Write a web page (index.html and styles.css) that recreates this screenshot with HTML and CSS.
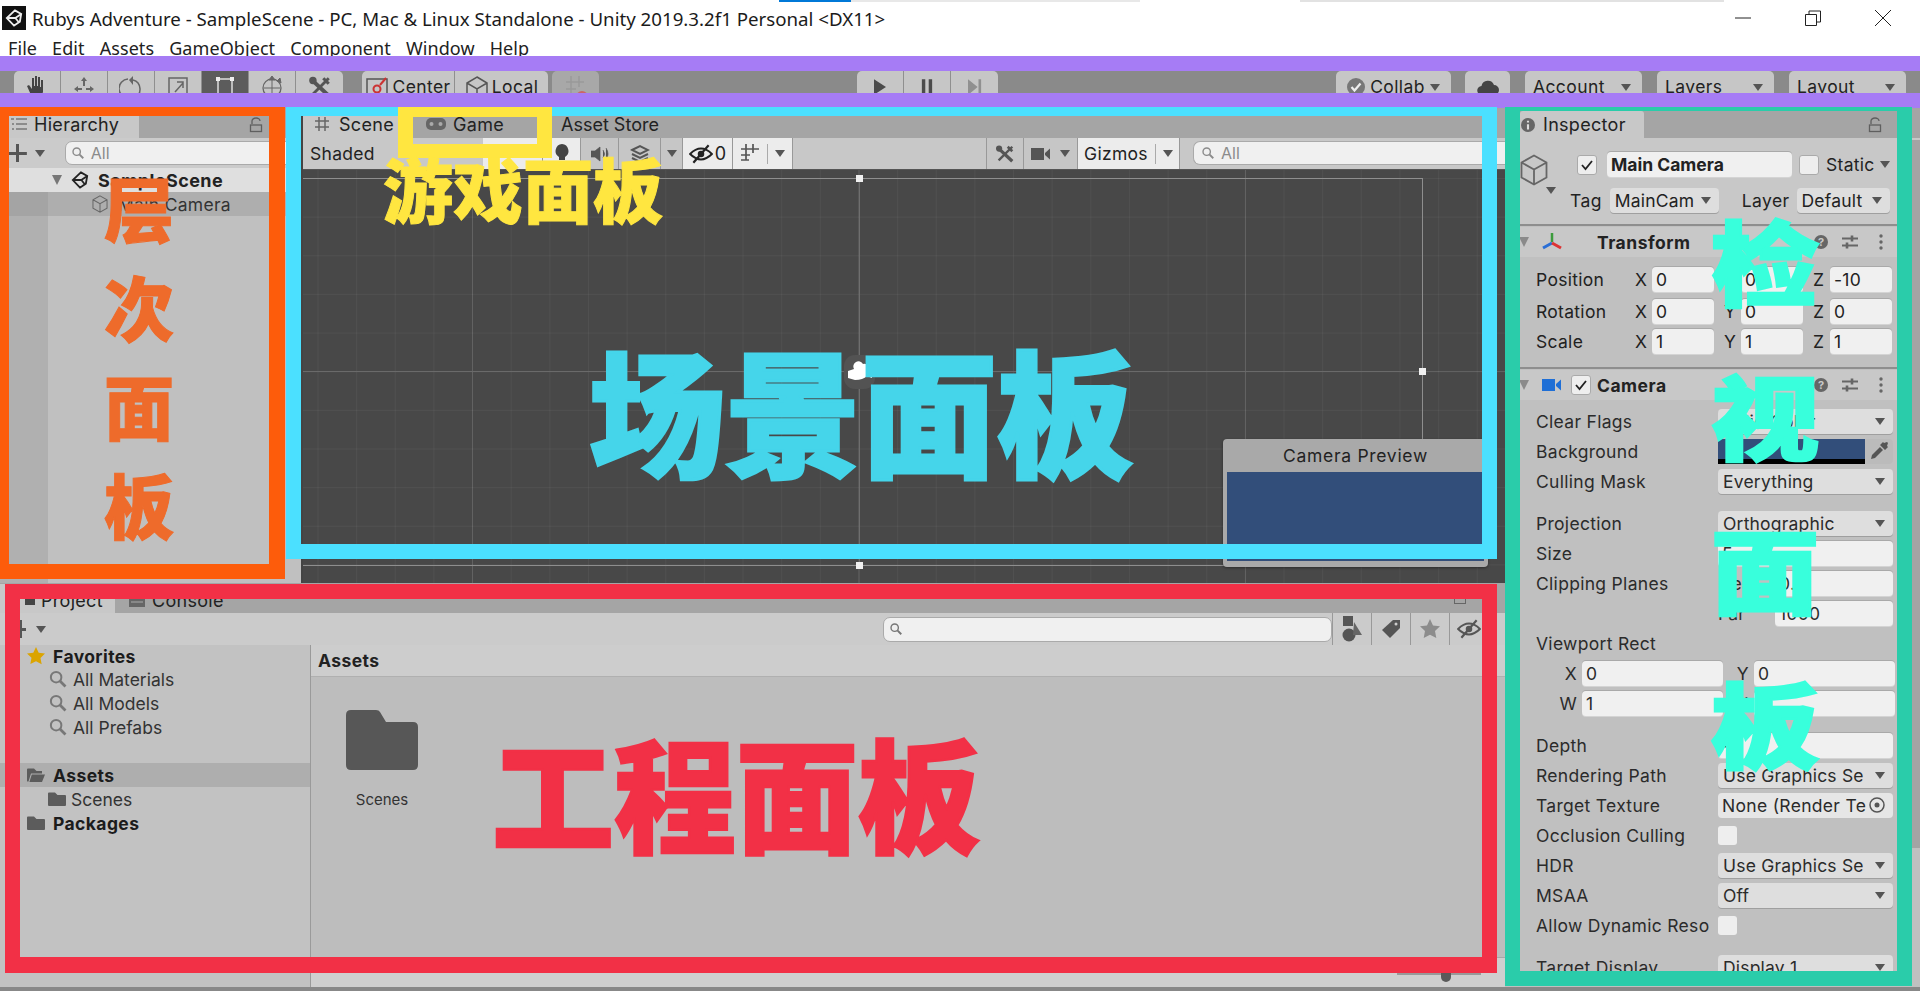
FILE: index.html
```html
<!DOCTYPE html>
<html lang="zh-CN">
<head>
  <meta charset="UTF-8">
  <title>Rubys Adventure - Unity</title>
  <link rel="stylesheet" href="styles.css">
</head>
<body>
  <svg class="defs" width="0" height="0">
    <defs>
      <symbol id="i-search" viewBox="0 0 16 16"><circle cx="6.5" cy="6.5" r="4.2" fill="none" stroke="currentColor" stroke-width="1.6"/><path d="M9.6 9.6l4.4 4.4" stroke="currentColor" stroke-width="2.2"/></symbol>
      <symbol id="i-lock" viewBox="0 0 14 16"><path d="M3 7V4a4 3 0 0 1 8 0" fill="none" stroke="currentColor" stroke-width="1.3"/><rect x="1.5" y="8" width="11" height="6.5" fill="none" stroke="currentColor" stroke-width="1.3"/></symbol>
      <symbol id="i-cube" viewBox="0 0 28 32"><path d="M14 1.5L26.5 8.500V23.500L14 30.500L1.500 23.500V8.500ZM1.500 8.500L14 15.500L26.500 8.500M14 15.500V30.500" fill="none" stroke="currentColor" stroke-width="1.8"/></symbol>
      <symbol id="i-unity" viewBox="0 0 20 20"><path d="M11 1.500L18 5.500L16.500 14L10 18.500L2 10L11 1.500ZM2 10H11.500M11.500 10L18 5.500M11.500 10L16 15.500" fill="none" stroke="currentColor" stroke-width="2"/></symbol>
      <symbol id="i-help" viewBox="0 0 16 16"><circle cx="8" cy="8" r="7" fill="currentColor"/><text x="8" y="12" text-anchor="middle" font-size="11" font-weight="700" font-family="Inter" fill="#c8c8c8">?</text></symbol>
      <symbol id="i-sliders" viewBox="0 0 18 16"><path d="M1 4.500H17M1 11.500H17" stroke="currentColor" stroke-width="1.800"/><path d="M11 1.500V7.500M6 8.500V14.500" stroke="currentColor" stroke-width="2.600"/></symbol>
      <symbol id="i-dots" viewBox="0 0 4 16"><circle cx="2" cy="2" r="1.700" fill="currentColor"/><circle cx="2" cy="8" r="1.700" fill="currentColor"/><circle cx="2" cy="14" r="1.700" fill="currentColor"/></symbol>
      <symbol id="i-folder" viewBox="0 0 18 16"><path d="M0 2.500Q0 1.500 1 1.500H7L9.500 4H17Q18 4 18 5V14Q18 15 17 15H1Q0 15 0 14Z" fill="currentColor"/></symbol>
      <symbol id="i-tools" viewBox="0 0 22 22"><path d="M3 4L19 19" stroke="currentColor" stroke-width="3.600"/><path d="M19 3L4 18" stroke="currentColor" stroke-width="2.600"/><circle cx="4.500" cy="5" r="3.400" fill="currentColor"/><path d="M15 2l5 5-2 2-5-5z" fill="currentColor"/></symbol>
      <symbol id="i-camera" viewBox="0 0 20 14"><rect x="0" y="1" width="13" height="12" fill="currentColor"/><path d="M14 6L19 1.500V12.500L14 8Z" fill="currentColor"/></symbol>
      <symbol id="i-eye" viewBox="0 0 22 18"><path d="M1 9Q11 -1 21 9Q11 19 1 9Z" fill="none" stroke="currentColor" stroke-width="1.800"/><circle cx="11" cy="9" r="3" fill="currentColor"/><path d="M4 17L18 1" stroke="currentColor" stroke-width="2"/></symbol>
      <symbol id="i-grid" viewBox="0 0 20 22"><path d="M6 1V17M13 1V10M1 6H19M1 12H10M1 17H9" fill="none" stroke="currentColor" stroke-width="1.700"/></symbol>
    </defs>
  </svg>

  <div class="window">
    <header class="titlebar">
      <span class="app-icon"><svg width="18" height="18"><use href="#i-unity"/></svg></span>
      <span class="title-text">Rubys Adventure - SampleScene - PC, Mac &amp; Linux Standalone - Unity 2019.3.2f1 Personal &lt;DX11&gt;</span>
      <div class="win-controls">
        <svg width="16" height="16" viewBox="0 0 16 16"><path d="M0 8H16" stroke="#222" stroke-width="1"/></svg>
        <svg width="16" height="16" viewBox="0 0 16 16"><path d="M.5 4.500H11.500V15.500H.5ZM4 4.500V1H15.500V12H11.500" fill="none" stroke="#222" stroke-width="1"/></svg>
        <svg width="16" height="16" viewBox="0 0 16 16"><path d="M0 0L16 16M16 0L0 16" stroke="#222" stroke-width="1"/></svg>
      </div>
    </header>

    <nav class="menubar">
      <span>File</span><span>Edit</span><span>Assets</span><span>GameObject</span><span>Component</span><span>Window</span><span>Help</span>
    </nav>

    <div class="toolbar">
      <div class="tb-group tools">
        <button class="tb-btn"><svg width="22" height="24" viewBox="0 0 22 24"><path d="M5 20L1 11l2-1 3 4V3h2v8h1V1h2v10h1V2h2v10h1V5h2v12l-2 5H7z" fill="#444"/></svg></button>
        <button class="tb-btn"><svg width="24" height="24" viewBox="0 0 24 24"><path d="M12 2l3 4h-2v5h-2V6H9zM2 14l4-3v2h4v2H6v2zM22 14l-4-3v2h-4v2h4v2zM12 24l3-4H9z" fill="#666"/></svg></button>
        <button class="tb-btn"><svg width="24" height="24" viewBox="0 0 24 24"><path d="M9 4A9.500 9.500 0 0 0 10 23M15 23A9.500 9.500 0 0 0 14 5" fill="none" stroke="#666" stroke-width="1.500"/><path d="M14 1v9l-4-5z" fill="#666"/></svg></button>
        <button class="tb-btn"><svg width="24" height="24" viewBox="0 0 24 24"><path d="M3 3H21V21H3Z" fill="none" stroke="#666" stroke-width="1.500"/><path d="M9 17L17 8M11 7H17V13" fill="none" stroke="#666" stroke-width="1.500"/></svg></button>
        <button class="tb-btn dark"><svg width="24" height="24" viewBox="0 0 24 24"><path d="M5 6V23M19 6V23M6 4H18" stroke="#ddd" stroke-width="1.500"/><path d="M3 2h4v4H3zM17 2h4v4h-4z" fill="#eee"/></svg></button>
        <button class="tb-btn"><svg width="24" height="24" viewBox="0 0 24 24"><circle cx="12" cy="13" r="9" fill="none" stroke="#666" stroke-width="1.300"/><path d="M12 5V21M4 13H20M12 1l3 4H9zM20 3l1 5-4-2z" fill="#666" stroke="#666" stroke-width="1"/></svg></button>
        <button class="tb-btn"><svg width="24" height="24" color="#555"><use href="#i-tools"/></svg></button>
      </div>
      <div class="tb-group pivots">
        <button class="tb-btn wide"><svg width="24" height="24" viewBox="0 0 24 24"><path d="M2 4H22V24H2Z" fill="none" stroke="#555" stroke-width="1.500"/><circle cx="12" cy="14" r="3.500" fill="none" stroke="#c33" stroke-width="2"/><path d="M15 10L21 3" stroke="#c33" stroke-width="2"/></svg>Center</button>
        <button class="tb-btn wide"><svg width="24" height="24" viewBox="0 0 24 24"><path d="M12 2L22 8V19L12 24L2 19V8ZM2 8L12 14L22 8M12 14V24" fill="none" stroke="#555" stroke-width="1.500"/><path d="M12 24a6 5 0 0 1 10 0" fill="none" stroke="#c33" stroke-width="2"/></svg>Local</button>
      </div>
      <div class="tb-group snap">
        <button class="tb-btn"><svg width="24" height="24" viewBox="0 0 24 24"><path d="M7 1V19M15 1V12M2 7H20M2 14H12" fill="none" stroke="#999" stroke-width="1.500"/><path d="M13 22a5 5 0 0 1 10 0" fill="none" stroke="#c66" stroke-width="2"/></svg></button>
      </div>
      <div class="tb-group play">
        <button class="tb-btn"><svg width="12" height="16" viewBox="0 0 14 18"><path d="M0 0L14 9L0 18Z" fill="#4b4b4b"/></svg></button>
        <button class="tb-btn"><svg width="12" height="16" viewBox="0 0 14 18"><path d="M1 0h4v18H1zM9 0h4v18H9z" fill="#4b4b4b"/></svg></button>
        <button class="tb-btn"><svg width="14" height="16" viewBox="0 0 16 18"><path d="M0 0L11 9L0 18ZM12 0h3v18h-3z" fill="#909090"/></svg></button>
      </div>
      <div class="tb-group collab">
        <button class="tb-btn pill collab-btn"><svg width="18" height="18" viewBox="0 0 18 18"><circle cx="9" cy="9" r="9" fill="#777"/><path d="M4.500 9l3 3.500 6-7" fill="none" stroke="#eee" stroke-width="2.200"/></svg>Collab<i class="caret"></i></button>
        <button class="tb-btn pill cloud-btn"><svg width="22" height="20" viewBox="0 0 22 20"><path d="M5 18a4.500 4.500 0 0 1-.5-9A6.500 6.500 0 0 1 17 8a5 5 0 0 1 0 10Z" fill="#444"/></svg></button>
        <button class="tb-btn pill menu-btn">Account<i class="caret"></i></button>
        <button class="tb-btn pill menu-btn">Layers<i class="caret"></i></button>
        <button class="tb-btn pill menu-btn">Layout<i class="caret"></i></button>
      </div>
    </div>

    <div class="workspace">
      <div class="left-col">
        <div class="top-row">
          <section class="hierarchy">
            <div class="tabstrip">
              <div class="tab active hier-tab">
                <svg width="16" height="14" viewBox="0 0 16 14"><path d="M5 2H16M5 7H16M5 12H16M0 2H3M1 7H3M1 12H3" stroke="#777" stroke-width="1.500"/></svg>
                Hierarchy
              </div>
              <svg class="lock" width="14" height="16"><use href="#i-lock"/></svg>
            </div>
            <div class="hier-tools">
              <span class="plus"></span><i class="caret"></i>
              <div class="search hier-search"><svg width="14" height="14"><use href="#i-search"/></svg>All</div>
            </div>
            <div class="hier-row scene-row">
              <i class="tri"></i>
              <svg width="18" height="18"><use href="#i-unity"/></svg>
              <b>SampleScene</b>
            </div>
            <div class="hier-row cam-row">
              <svg width="16" height="18"><use href="#i-cube"/></svg>
              <span>Main Camera</span>
            </div>
            <div class="hier-rest"></div>
          </section>

          <section class="scene">
            <div class="tabstrip scene-tabs">
              <div class="tab active scene-tab">
                <svg width="14" height="14" viewBox="0 0 14 14"><path d="M4 0V14M10 0V14M0 4H14M0 10H14" stroke="#666" stroke-width="1.500"/></svg>
                Scene
              </div>
              <div class="tab game-tab">
                <svg width="20" height="12" viewBox="0 0 20 12"><rect width="20" height="12" rx="5" fill="#666"/><circle cx="5.500" cy="6" r="2" fill="#aaa"/><circle cx="14.500" cy="6" r="2" fill="#aaa"/></svg>
                Game
              </div>
              <div class="tab store-tab">Asset Store</div>
            </div>
            <div class="scene-tools">
              <span class="shaded">Shaded</span>
              <div class="st-btn lit w2d"></div>
              <div class="st-btn lit w37"><svg width="14" height="20" viewBox="0 0 14 20"><path d="M7 0a7 7 0 0 1 3 13v3H4v-3A7 7 0 0 1 7 0ZM4 17h6v3H4z" fill="#444"/></svg></div>
              <div class="st-btn w37"><svg width="18" height="16" viewBox="0 0 18 16"><path d="M0 5h4l5-4v14l-5-4H0zM12 4q3 4 0 8M15 2q4 6 0 12" fill="#555" stroke="#555" stroke-width=".7"/></svg></div>
              <div class="st-btn w42"><svg width="20" height="20" viewBox="0 0 20 20"><path d="M2 6l8-4 8 4-8 4zM2 10l8 4 8-4M2 14l8 4 8-4" fill="none" stroke="#555" stroke-width="2"/></svg></div>
              <div class="st-btn w20"><i class="caret"></i></div>
              <div class="st-btn lit hidden-btn"><svg width="24" height="20"><use href="#i-eye"/></svg>0</div>
              <div class="st-btn lit grid-btn"><svg width="20" height="22"><use href="#i-grid"/></svg><span class="vsep"></span><i class="caret"></i></div>
              <div class="st-btn w37 tool-btn"><svg width="20" height="20"><use href="#i-tools"/></svg></div>
              <div class="st-btn cam-btn"><svg width="20" height="14"><use href="#i-camera"/></svg><i class="caret"></i></div>
              <div class="st-btn lit gizmos">Gizmos<span class="vsep"></span><i class="caret"></i></div>
              <div class="search scene-search"><svg width="14" height="14"><use href="#i-search"/></svg>All</div>
            </div>
            <div class="scene-view">
              <span class="gz gz-top"></span>
              <span class="gz gz-mid"></span>
              <span class="gz gz-bottom"></span>
              <span class="gz gz-right"></span>
              <span class="gz gz-center"></span>
              <span class="handle h-top"></span>
              <span class="handle h-right"></span>
              <span class="handle h-bottom"></span>
              <span class="cam-ring"></span>
              <svg class="cam-gizmo" width="26" height="22" viewBox="0 0 26 22"><path d="M1 18V11L7 9A5 5 0 0 1 16 4A5 5 0 0 1 21 12L25 10V18L20 16Q16 20 8 20Z" fill="#fff"/></svg>
              <div class="preview">
                <div class="preview-title">Camera Preview</div>
                <div class="preview-body"></div>
              </div>
            </div>
          </section>
        </div>

        <section class="project">
          <div class="tabstrip proj-tabs">
            <div class="tab active proj-tab"><span class="sq"></span>Project</div>
            <div class="tab console-tab"><svg width="16" height="14" viewBox="0 0 16 14"><rect width="16" height="14" fill="#666"/><path d="M2 5H14M2 9H14" stroke="#aaa"/></svg>Console</div>
            <span class="maxi"></span>
          </div>
          <div class="proj-tools">
            <span class="plus small"></span><i class="caret"></i>
            <div class="search proj-search"><svg width="14" height="14"><use href="#i-search"/></svg></div>
            <div class="pt-btn"><svg width="22" height="26" viewBox="0 0 22 26"><rect x="2" y="0" width="10" height="10" fill="#555"/><circle cx="8" cy="19" r="6.500" fill="#555"/><path d="M13 6L21 19H12Z" fill="#666"/></svg></div>
            <div class="pt-btn"><svg width="20" height="20" viewBox="0 0 20 20"><path d="M12 1H19V9L9 19L1 11Z" fill="#555"/><circle cx="15" cy="5" r="1.500" fill="#ccc"/></svg></div>
            <div class="pt-btn"><svg width="20" height="20" viewBox="0 0 20 20"><path d="M10 0l3 6.500 7 .8-5 4.800 1.300 7L10 15.700 3.700 19 5 12 0 7.300l7-.8z" fill="#8c8c8c"/></svg></div>
            <div class="pt-btn"><svg width="24" height="20"><use href="#i-eye"/></svg></div>
          </div>
          <div class="proj-body">
            <div class="tree">
              <div class="tree-row top"><svg width="18" height="18" viewBox="0 0 20 20"><path d="M10 0l3 6.500 7 .8-5 4.800 1.300 7L10 15.700 3.700 19 5 12 0 7.300l7-.8z" fill="#dba400"/></svg><b>Favorites</b></div>
              <div class="tree-row sub"><svg class="mag" width="20" height="20"><use href="#i-search"/></svg>All Materials</div>
              <div class="tree-row sub"><svg class="mag" width="20" height="20"><use href="#i-search"/></svg>All Models</div>
              <div class="tree-row sub"><svg class="mag" width="20" height="20"><use href="#i-search"/></svg>All Prefabs</div>
              <div class="tree-row blank"></div>
              <div class="tree-row selected"><svg class="fold" width="18" height="16" viewBox="0 0 18 16"><path d="M0 2.500Q0 1.500 1 1.500H7L9.500 4H15V6.500H4L1.500 14.500H1Q0 14.500 0 14ZM4.800 7.500H18L15 15H2.400Z" fill="#5c5c5c"/></svg><b>Assets</b></div>
              <div class="tree-row sub"><svg class="fold" width="18" height="16"><use href="#i-folder"/></svg>Scenes</div>
              <div class="tree-row"><svg class="fold" width="18" height="16"><use href="#i-folder"/></svg><b>Packages</b></div>
            </div>
            <div class="browser">
              <div class="crumb">Assets</div>
              <div class="grid-area">
                <div class="asset">
                  <svg width="72" height="60" viewBox="0 0 72 60"><path d="M0 5Q0 0 5 0H30Q33 0 34 2L40 12H67Q72 12 72 17V55Q72 60 67 60H5Q0 60 0 55Z" fill="#575757"/></svg>
                  <span>Scenes</span>
                </div>
              </div>
              <div class="browser-foot"><span class="zoom-track"></span><span class="zoom-knob"></span></div>
            </div>
          </div>
        </section>
      </div>

      <aside class="inspector">
        <div class="tabstrip insp-tabs">
          <div class="tab active insp-tab">
            <svg width="14" height="16" viewBox="0 0 16 16"><circle cx="8" cy="8" r="8" fill="#666"/><path d="M8 3v2M8 7v6" stroke="#ddd" stroke-width="2.400"/></svg>
            Inspector
          </div>
          <svg class="lock" width="14" height="16"><use href="#i-lock"/></svg>
        </div>

        <div class="go-head">
          <div class="go-icon">
            <svg width="28" height="32"><use href="#i-cube"/></svg>
            <i class="caret"></i>
          </div>
          <div class="go-lines">
            <div class="go-line">
              <span class="check on"><svg width="12" height="12" viewBox="0 0 12 12"><path d="M1 6l3.500 4L11 2" fill="none" stroke="#222" stroke-width="1.800"/></svg></span>
              <div class="field name-field">Main Camera</div>
              <span class="check"></span>
              <span class="static-label">Static<i class="caret"></i></span>
            </div>
            <div class="go-line second">
              <span>Tag</span>
              <div class="drop tag-drop">MainCam<i class="caret"></i></div>
              <span class="layer-label">Layer</span>
              <div class="drop layer-drop">Default<i class="caret"></i></div>
            </div>
          </div>
        </div>

        <div class="comp-head">
          <i class="tri"></i>
          <svg class="axis" width="20" height="18" viewBox="0 0 20 18"><path d="M10 0V9" stroke="#3c9b3c" stroke-width="2.500"/><path d="M10 10L1 15" stroke="#2b6fd6" stroke-width="3"/><path d="M10 10L19 15" stroke="#d33" stroke-width="3"/></svg>
          <b class="comp-name">Transform</b>
          <div class="comp-icons"><svg class="help" width="16" height="16"><use href="#i-help"/></svg><svg width="18" height="16"><use href="#i-sliders"/></svg><svg width="4" height="16"><use href="#i-dots"/></svg></div>
        </div>
        <div class="xform">
          <div class="xrow pos"><span class="lbl">Position</span><span class="ax">X</span><div class="field">0</div><span class="ax">Y</span><div class="field">0</div><span class="ax">Z</span><div class="field">-10</div></div>
          <div class="xrow"><span class="lbl">Rotation</span><span class="ax">X</span><div class="field">0</div><span class="ax">Y</span><div class="field">0</div><span class="ax">Z</span><div class="field">0</div></div>
          <div class="xrow"><span class="lbl">Scale</span><span class="ax">X</span><div class="field">1</div><span class="ax">Y</span><div class="field">1</div><span class="ax">Z</span><div class="field">1</div></div>
        </div>

        <div class="comp-head camera-head">
          <i class="tri"></i>
          <svg class="axis" width="20" height="14"><use href="#i-camera"/></svg>
          <span class="check on small"><svg width="12" height="12" viewBox="0 0 12 12"><path d="M1 6l3.500 4L11 2" fill="none" stroke="#222" stroke-width="1.800"/></svg></span>
          <b class="comp-name">Camera</b>
          <div class="comp-icons"><svg class="help" width="16" height="16"><use href="#i-help"/></svg><svg width="18" height="16"><use href="#i-sliders"/></svg><svg width="4" height="16"><use href="#i-dots"/></svg></div>
        </div>
        <div class="props">
          <div class="prop"><span class="lbl">Clear Flags</span><div class="drop">Solid Color<i class="caret"></i></div></div>
          <div class="prop"><span class="lbl">Background</span><div class="color-field"><span class="swatch"></span><svg width="20" height="20" viewBox="0 0 20 20"><path d="M2 18l1-4 8-8 3 3-8 8zM11 4l3-3 1 1 3-1 1 1-1 3 1 1-3 3z" fill="#555"/></svg></div></div>
          <div class="prop"><span class="lbl">Culling Mask</span><div class="drop">Everything<i class="caret"></i></div></div>
          <div class="prop gap"><span class="lbl">Projection</span><div class="drop">Orthographic<i class="caret"></i></div></div>
          <div class="prop"><span class="lbl">Size</span><div class="field">5</div></div>
          <div class="prop"><span class="lbl">Clipping Planes</span><div class="sub-field"><span>Near</span><div class="field">0.3</div></div></div>
          <div class="prop"><span class="lbl"></span><div class="sub-field"><span>Far</span><div class="field">1000</div></div></div>
          <div class="prop"><span class="lbl">Viewport Rect</span></div>
          <div class="prop rect-row"><span class="ax">X</span><div class="field">0</div><span class="ax">Y</span><div class="field">0</div></div>
          <div class="prop rect-row"><span class="ax">W</span><div class="field">1</div><span class="ax">H</span><div class="field">1</div></div>
          <div class="prop gap"><span class="lbl">Depth</span><div class="field">-1</div></div>
          <div class="prop"><span class="lbl">Rendering Path</span><div class="drop">Use Graphics Se<i class="caret"></i></div></div>
          <div class="prop"><span class="lbl">Target Texture</span><div class="obj-field"><span>None (Render Te</span><svg width="18" height="18" viewBox="0 0 18 18"><circle cx="9" cy="9" r="7" fill="none" stroke="#555" stroke-width="1.500"/><circle cx="9" cy="9" r="2.500" fill="#555"/></svg></div></div>
          <div class="prop"><span class="lbl">Occlusion Culling</span><span class="check flat"></span></div>
          <div class="prop"><span class="lbl">HDR</span><div class="drop">Use Graphics Se<i class="caret"></i></div></div>
          <div class="prop"><span class="lbl">MSAA</span><div class="drop">Off<i class="caret"></i></div></div>
          <div class="prop"><span class="lbl">Allow Dynamic Reso</span><span class="check flat"></span></div>
          <div class="prop gap"><span class="lbl">Target Display</span><div class="drop">Display 1<i class="caret"></i></div></div>
        </div>
        <span class="insp-scroll"></span>
      </aside>
    </div>
    <div class="statusbar"></div>
  </div>

  <!-- colored marks drawn on top of the screenshot -->
  <div class="marks">
    <span class="seam seam-a"></span>
    <span class="seam seam-b"></span>
    <span class="frame f-orange"></span>
    <span class="frame f-cyan"></span>
    <span class="frame f-red"></span>
    <span class="frame f-teal"></span>
    <span class="frame f-yellow"></span>
    <span class="mark m-hier">层次面板</span>
    <span class="mark m-scene">场景面板</span>
    <span class="mark m-game">游戏面板</span>
    <span class="mark m-proj">工程面板</span>
    <span class="mark m-insp">检视面板</span>
  </div>
</body>
</html>
```

FILE: styles.css
```css
* {
  box-sizing: border-box;
}
body {
  margin: 0;
  width: 1920px;
  height: 991px;
  overflow: hidden;
  position: relative;
  background: #fff;
  color: #222;
  font-family: Inter, "Noto Sans", sans-serif;
  font-size: 17.5px;
}
.defs {
  position: absolute;
}
svg {
  flex: none;
}
i {
  display: block;
}
.window {
  display: flex;
  flex-direction: column;
  height: 991px;
}

/* title + menu */
.titlebar {
  height: 36px;
  display: flex;
  align-items: center;
  padding-left: 2px;
  position: relative;
  font-family: "Noto Sans", "Noto Sans CJK SC", sans-serif;
  font-size: 18.7px;
}
.titlebar::before {
  content: "";
  position: absolute;
  left: 779px;
  top: 0;
  width: 361px;
  height: 2px;
  background: linear-gradient(to right, #0078d7 72px, #e8e8e8 72px);
}
.titlebar::after {
  content: "";
  position: absolute;
  left: 1300px;
  top: 0;
  width: 424px;
  height: 2px;
  background: #e2e2e2;
}
.app-icon {
  width: 24px;
  height: 24px;
  background: #111;
  color: #eee;
  display: flex;
  align-items: center;
  justify-content: center;
  margin-right: 6px;
}
.title-text {
  color: #1b1b1b;
}
.win-controls {
  margin-left: auto;
  display: flex;
  gap: 54px;
  padding-right: 29px;
}
.menubar {
  height: 35px;
  display: flex;
  gap: 15px;
  padding-left: 8px;
  font-family: "Noto Sans", "Noto Sans CJK SC", sans-serif;
  font-size: 18px;
  line-height: 24px;
  letter-spacing: .08px;
}

/* main toolbar */
.toolbar {
  height: 37px;
  background: #8a8a8a;
  display: flex;
  padding-left: 14px;
  overflow: hidden;
}
.tb-group {
  display: flex;
}
.tb-btn {
  width: 47px;
  height: 34px;
  border: 0;
  border-right: 1px solid #8f8f8f;
  background: #c6c6c6;
  padding: 4px 0 0;
  display: flex;
  justify-content: center;
  align-items: flex-start;
  font: inherit;
  color: #222;
  letter-spacing: .4px;
}
.tb-group .tb-btn:first-child {
  border-top-left-radius: 5px;
}
.tb-group .tb-btn:last-child {
  border-top-right-radius: 5px;
  border-right: 0;
}
.tb-btn.dark {
  background: #5c5c5c;
}
.tb-btn.wide {
  width: 93px;
  gap: 3px;
  line-height: 24px;
  padding-top: 4px;
}
.pivots {
  margin-left: 19px;
}
.snap {
  margin-left: 4px;
}
.snap .tb-btn {
  background: #a8a8a8;
}
.play {
  margin-left: 258px;
}
.play .tb-btn {
  padding-top: 8px;
}
.collab {
  margin-left: 338px;
}
.tb-btn.pill {
  border-radius: 5px 5px 0 0;
  border-right: 0;
  align-items: center;
  padding: 0 0 4px;
  height: 36px;
  line-height: 26px;
}
.collab-btn {
  width: 115px;
  gap: 5px;
  margin-right: 14px;
}
.cloud-btn {
  width: 45px;
  margin-right: 15px;
}
.menu-btn {
  width: 117px;
  justify-content: space-between !important;
  padding: 0 11px 4px 8px !important;
  margin-right: 15px;
}
.caret {
  width: 0;
  height: 0;
  flex: none;
  border-left: 5.500px solid transparent;
  border-right: 5.500px solid transparent;
  border-top: 7px solid #555;
}

/* panels */
.workspace {
  height: 879px;
  display: flex;
}
.left-col {
  width: 1505px;
  display: flex;
  flex-direction: column;
}
.top-row {
  height: 475px;
  display: flex;
}
.tabstrip {
  height: 30px;
  background: #a5a5a5;
  display: flex;
  align-items: flex-end;
  position: relative;
  flex: none;
}
.tab {
  height: 28px;
  display: flex;
  align-items: center;
  gap: 7px;
  font-size: 18px;
  letter-spacing: .3px;
}
.tab.active {
  background: #c8c8c8;
}
.lock {
  position: absolute;
  top: 9px;
  color: #5f5f5f;
}
.search {
  background: #f0f0f0;
  border: 1px solid #aaa;
  border-radius: 7px;
  display: flex;
  align-items: center;
  gap: 6px;
  color: #8b8b8b;
}

/* hierarchy */
.hierarchy {
  width: 301px;
  display: flex;
  flex-direction: column;
  background: #c0c0c0;
}
.hier-tab {
  width: 139px;
  padding-left: 11px;
}
.hierarchy .lock {
  left: 249px;
}
.hier-tools {
  height: 30px;
  background: #cbcbcb;
  display: flex;
  align-items: center;
  padding-left: 9px;
}
.plus {
  width: 18px;
  height: 18px;
  margin-right: 8px;
  background: linear-gradient(#555, #555) center / 100% 3px no-repeat,
    linear-gradient(#555, #555) center / 3px 100% no-repeat;
}
.plus.small {
  width: 12px;
  margin: 0 10px 0 14px;
}
.hier-search {
  margin-left: 20px;
  width: 240px;
  height: 24px;
  padding-left: 5px;
  font-size: 16px;
}
.hier-row {
  height: 24px;
  display: flex;
  align-items: center;
  flex: none;
}
.scene-row {
  background: #dfdfdf;
  padding-left: 52px;
  gap: 9px;
}
.scene-row b {
  font-size: 18px;
  letter-spacing: .4px;
}
.tri {
  width: 0;
  height: 0;
  flex: none;
  border-left: 5.500px solid transparent;
  border-right: 5.500px solid transparent;
  border-top: 10px solid #777;
}
.cam-row {
  height: 24px;
  padding-left: 92px;
  gap: 10px;
  color: #333;
  letter-spacing: .3px;
  background: linear-gradient(to right, #a4a4a4 48px, #aeaeae 48px);
}
.cam-row svg {
  color: #666;
}
.hier-rest {
  flex: 1;
  background: linear-gradient(to right, #b0b0b0 48px, #c0c0c0 48px);
}

/* scene */
.scene {
  width: 1204px;
  display: flex;
  flex-direction: column;
  border-left: 2px solid #444;
}
.scene-tabs .tab {
  padding-left: 12px;
}
.scene-tab {
  width: 95px;
  gap: 10px;
}
.game-tab {
  width: 155px;
  padding-left: 28px !important;
}
.store-tab {
  padding-left: 8px !important;
  letter-spacing: 0;
}
.scene-tools {
  height: 32px;
  background: #c8c8c8;
  display: flex;
  align-items: stretch;
  flex: none;
  border-bottom: 1px solid #555;
}
.shaded {
  width: 180px;
  padding-left: 7px;
  line-height: 31px;
  letter-spacing: .3px;
}
.st-btn {
  display: flex;
  align-items: center;
  justify-content: center;
  border-right: 1px solid #999;
  color: #555;
  background: #c6c6c6;
  height: 31px;
}
.st-btn.lit {
  background: #ececec;
}
.w2d {
  width: 60px;
}
.w37 {
  width: 38px;
}
.w42 {
  width: 42px;
}
.w20 {
  width: 22px;
}
.hidden-btn {
  width: 50px;
  gap: 2px;
  color: #222;
  font-size: 18px;
}
.grid-btn {
  width: 60px;
  gap: 7px;
  margin-right: 193px;
}
.tool-btn {
  border-left: 1px solid #999;
}
.cam-btn {
  width: 54px;
  gap: 9px;
}
.gizmos {
  width: 102px;
  gap: 7px;
  color: #222;
  letter-spacing: .3px;
}
.vsep {
  width: 1px;
  height: 20px;
  background: #aaa;
}
.scene-search {
  margin: 3px 0 3px 13px;
  flex: 1;
  padding-left: 7px;
  height: 24px;
  font-size: 16px;
  border-right: 0;
  border-radius: 7px 0 0 7px;
}
.scene-view {
  flex: 1;
  position: relative;
  overflow: hidden;
  background-color: #484848;
  background-image:
    linear-gradient(to right, rgba(255, 255, 255, .11) 1px, transparent 1px),
    linear-gradient(to bottom, rgba(255, 255, 255, .11) 1px, transparent 1px),
    linear-gradient(to right, rgba(255, 255, 255, .045) 1px, transparent 1px),
    linear-gradient(to bottom, rgba(255, 255, 255, .045) 1px, transparent 1px);
  background-size: 386.500px 386.500px, 386.500px 386.500px, 38.650px 38.650px, 38.650px 38.650px;
  background-position: 169px 0, 0 201px, 14.500px 0, 0 8px;
}
.gz {
  position: absolute;
  background: #8e8e8e;
}
.gz-top {
  left: 0;
  top: 8px;
  width: 1120px;
  height: 1px;
}
.gz-mid {
  left: 0;
  top: 201px;
  width: 1120px;
  height: 1px;
  background: #6a6a6a;
}
.gz-bottom {
  left: 0;
  top: 395px;
  width: 1120px;
  height: 1px;
}
.gz-right {
  left: 1119px;
  top: 8px;
  width: 1px;
  height: 388px;
}
.gz-center {
  left: 556px;
  top: 8px;
  width: 1px;
  height: 388px;
  background: #6e6e6e;
}
.handle {
  position: absolute;
  width: 7px;
  height: 7px;
  background: #f0f0f0;
}
.h-top {
  left: 553px;
  top: 5px;
}
.h-right {
  left: 1116px;
  top: 198px;
}
.h-bottom {
  left: 553px;
  top: 392px;
}
.cam-ring {
  position: absolute;
  left: 541px;
  top: 185px;
  width: 31px;
  height: 34px;
  border-radius: 11px;
  background: #535353;
}
.cam-gizmo {
  position: absolute;
  left: 544px;
  top: 190px;
}
.preview {
  position: absolute;
  left: 920px;
  top: 269px;
  width: 265px;
  height: 128px;
  background: #a9a9a9;
  border-radius: 4px;
  padding: 0 4px 6px;
  display: flex;
  flex-direction: column;
  box-shadow: 0 1px 3px rgba(0, 0, 0, .4);
}
.preview-title {
  height: 33px;
  line-height: 34px;
  text-align: center;
  letter-spacing: .7px;
  color: #222;
}
.preview-body {
  flex: 1;
  background: #324e7a;
}

/* project */
.project {
  height: 404px;
  display: flex;
  flex-direction: column;
  background: #c0c0c0;
}
.proj-tabs .tab {
  height: 29px;
  padding-top: 3px;
}
.proj-tab {
  width: 115px;
  padding-left: 25px;
  gap: 6px;
}
.sq {
  width: 10px;
  height: 10px;
  background: #444;
}
.console-tab {
  padding-left: 14px;
}
.maxi {
  position: absolute;
  left: 1454px;
  top: 13px;
  width: 12px;
  height: 8px;
  border: 1px solid #666;
}
.proj-tools {
  height: 32px;
  flex: none;
  background: #cbcbcb;
  display: flex;
  align-items: center;
}
.proj-search {
  margin-left: 837px;
  width: 449px;
  height: 25px;
  padding-left: 5px;
  color: #777;
}
.pt-btn {
  width: 39px;
  height: 32px;
  border-left: 1px solid #999;
  display: flex;
  align-items: center;
  justify-content: center;
  color: #555;
}
.pt-btn:first-of-type {
  margin-left: 5px;
}
.proj-body {
  flex: 1;
  display: flex;
}
.tree {
  width: 311px;
  background: #c2c2c2;
  border-right: 1px solid #9a9a9a;
}
.tree-row {
  height: 24px;
  display: flex;
  align-items: center;
  gap: 8px;
  padding-left: 27px;
  color: #333;
}
.tree-row b {
  color: #1c1c1c;
  letter-spacing: .4px;
}
.tree-row.top {
  height: 22px;
}
.tree-row.sub {
  padding-left: 48px;
  gap: 5px;
}
.tree-row.selected {
  background: #aeaeae;
}
.mag {
  color: #777;
}
.fold {
  color: #5c5c5c;
}
.browser {
  flex: 1;
  display: flex;
  flex-direction: column;
  background: #bdbdbd;
}
.crumb {
  height: 32px;
  background: #cdcdcd;
  padding-left: 7px;
  line-height: 31px;
  font-weight: 700;
  letter-spacing: .4px;
  border-bottom: 1px solid #b0b0b0;
}
.grid-area {
  flex: 1;
  padding: 33px 0 0 35px;
}
.asset {
  width: 72px;
  display: flex;
  flex-direction: column;
  align-items: center;
  gap: 20px;
  font-size: 15px;
  color: #333;
}
.browser-foot {
  height: 30px;
  background: #cfcfcf;
  border-top: 1px solid #a8a8a8;
  position: relative;
  overflow: hidden;
}
.zoom-track {
  position: absolute;
  left: 1086px;
  top: 15px;
  width: 84px;
  height: 2px;
  background: #999;
}
.zoom-knob {
  position: absolute;
  left: 1130px;
  top: 10px;
  width: 10px;
  height: 14px;
  border-radius: 5px;
  background: #5a5a5a;
}

/* inspector */
.inspector {
  width: 415px;
  background: #c0c0c0;
  position: relative;
  overflow: hidden;
}
.insp-tabs .tab {
  height: 27px;
}
.insp-tab {
  margin-left: 15px;
  width: 124px;
  padding-left: 1px;
  gap: 8px;
  border-radius: 3px 3px 0 0;
}
.inspector .lock {
  left: 363px;
}
.go-head {
  height: 88px;
  background: #c8c8c8;
  border-bottom: 2px solid #8e8e8e;
  display: flex;
  padding-left: 15px;
}
.go-icon {
  width: 50px;
  padding-top: 16px;
  color: #666;
  position: relative;
}
.go-icon .caret {
  position: absolute;
  left: 26px;
  top: 49px;
}
.go-lines {
  flex: 1;
  padding-top: 14px;
  padding-right: 20px;
}
.go-line {
  display: flex;
  align-items: center;
  height: 25px;
  padding-left: 7px;
}
.check {
  width: 20px;
  height: 20px;
  flex: none;
  background: #eeeeee;
  border: 1px solid #aaa;
  border-radius: 3px;
  display: flex;
  align-items: center;
  justify-content: center;
}
.check.small {
  margin-left: 9px;
}
.check.flat {
  width: 19px;
  height: 19px;
  border: 0;
  background: #eeeeee;
}
.field {
  background: #f0f0f0;
  border-radius: 4px;
  height: 25px;
  line-height: 25px;
  padding-left: 4px;
  box-shadow: 0 -1px 0 #a9a9a9, 0 1px 0 #d4d4d4;
  flex: 1;
  min-width: 0;
  white-space: nowrap;
  overflow: hidden;
}
.name-field {
  flex: none;
  width: 185px;
  margin: 0 7px 0 10px;
  font-weight: 700;
  padding-left: 4px;
}
.static-label {
  display: flex;
  align-items: center;
  gap: 5px;
  margin-left: 7px;
  letter-spacing: .3px;
}
.go-line.second {
  margin-top: 11px;
  padding-left: 0;
  letter-spacing: .4px;
}
.drop {
  background: #dedede;
  border-radius: 4px;
  height: 25px;
  padding: 0 8px 0 5px;
  display: flex;
  align-items: center;
  justify-content: space-between;
  flex: 1;
  box-shadow: 0 1px 0 #9f9f9f;
  white-space: nowrap;
  overflow: hidden;
  letter-spacing: .2px;
}
.tag-drop {
  flex: none;
  width: 109px;
  margin-left: 8px;
}
.layer-label {
  margin-left: 23px;
}
.layer-drop {
  flex: none;
  width: 93px;
  margin-left: 7px;
}
.comp-head {
  height: 30px;
  background: #c8c8c8;
  display: flex;
  align-items: center;
  padding-left: 14px;
  position: relative;
  margin-top: 1px;
}
.comp-head .tri {
  border-top-color: #8a8a8a;
}
.axis {
  margin-left: 13px;
}
.camera-head .axis {
  color: #1f6fd6;
}
.comp-name {
  position: absolute;
  left: 92px;
  letter-spacing: .5px;
}
.comp-icons {
  margin-left: auto;
  display: flex;
  align-items: center;
  gap: 20px;
  padding-right: 37px;
  color: #666;
}
.comp-icons .help {
  margin-right: -8px;
}
.xform {
  padding: 7px 27px 11px 31px;
  border-bottom: 2px solid #8e8e8e;
}
.xrow {
  display: flex;
  align-items: center;
  height: 30px;
  letter-spacing: .3px;
}
.xrow.pos {
  margin-bottom: 2px;
}
.xrow .lbl {
  width: 99px;
}
.xrow .ax {
  width: 18px;
}
.xrow .field {
  margin-right: 10px;
  flex: none;
  width: 62px;
}
.xrow .field:last-child {
  margin-right: 0;
}
.xrow .ax + .field {
  margin-left: -1px;
}
.props {
  padding: 6px 27px 0 31px;
}
.prop {
  height: 30px;
  display: flex;
  align-items: center;
  letter-spacing: .3px;
  color: #2b2b2b;
}
.prop.gap {
  margin-top: 12px;
}
.prop > .lbl {
  width: 182px;
  flex: none;
  white-space: nowrap;
  overflow: hidden;
}
.color-field {
  flex: 1;
  height: 25px;
  background: #bbb;
  border-radius: 4px;
  display: flex;
  align-items: center;
}
.swatch {
  width: 147px;
  height: 25px;
  background: linear-gradient(#324e7a 20px, #000 20px);
  margin-right: 4px;
}
.sub-field {
  flex: 1;
  display: flex;
  align-items: center;
}
.sub-field span {
  width: 57px;
}
.rect-row .ax {
  width: 45px;
  text-align: right;
  padding-right: 5px;
  flex: none;
}
.rect-row .ax:nth-child(3) {
  width: 31px;
}
.rect-row .field {
  flex: none;
  width: 141px;
}
.rect-row .ax:first-child {
  width: 46px;
}
.obj-field {
  flex: 1;
  height: 25px;
  background: #e6e6e6;
  border-radius: 4px;
  display: flex;
  align-items: center;
  justify-content: space-between;
  padding: 0 7px 0 4px;
  white-space: nowrap;
}
.insp-scroll {
  position: absolute;
  right: 0;
  top: 32px;
  width: 8px;
  height: 708px;
  background: #a4a4a4;
}
.statusbar {
  height: 4px;
  background: #888;
}

/* overlay marks */
.marks {
  position: absolute;
  left: 0;
  top: 0;
  width: 1920px;
  height: 991px;
  overflow: hidden;
}
.seam {
  position: absolute;
  left: 0;
  width: 1920px;
  height: 15px;
  background: #a67cf5;
}
.seam-a {
  top: 56px;
}
.seam-b {
  top: 93px;
}
.frame {
  position: absolute;
  border-style: solid;
}
.f-orange {
  left: 0;
  top: 107px;
  width: 285px;
  height: 472px;
  border-color: #fd5c0b;
  border-width: 9px 16px 15px 9px;
}
.f-cyan {
  left: 286px;
  top: 107px;
  width: 1211px;
  height: 452px;
  border-color: #4be0ff;
  border-width: 9px 15px 15px 15px;
}
.f-red {
  left: 5px;
  top: 584px;
  width: 1492px;
  height: 389px;
  border-color: #f23046;
  border-width: 15px 15px 16px 15px;
}
.f-teal {
  left: 1505px;
  top: 107px;
  width: 407px;
  height: 879px;
  border-color: #2accaa;
  border-width: 4px 15px 15px 15px;
}
.f-yellow {
  left: 398px;
  top: 107px;
  width: 154px;
  height: 51px;
  border-color: #ffe640;
  border-width: 10px 15px 14px 15px;
}
.mark {
  position: absolute;
  font-family: "Noto Sans CJK SC", sans-serif;
  font-weight: 900;
  line-height: 1;
  white-space: nowrap;
}
.m-hier {
  left: 104px;
  top: 157px;
  width: 70px;
  font-size: 70px;
  line-height: 99px;
  white-space: normal;
  color: #ee6b2b;
  -webkit-text-stroke: 1px #ee6b2b;
}
.m-scene {
  left: 589px;
  top: 340px;
  font-size: 136px;
  color: #45d5ea;
  -webkit-text-stroke: 3px #45d5ea;
}
.m-game {
  left: 383px;
  top: 153px;
  font-size: 70px;
  color: #ffe640;
  -webkit-text-stroke: 1px #ffe640;
}
.m-proj {
  left: 492px;
  top: 729px;
  font-size: 122px;
  color: #f23046;
  -webkit-text-stroke: 2.500px #f23046;
}
.m-insp {
  left: 1711px;
  top: 183px;
  width: 108px;
  font-size: 108px;
  line-height: 181px;
  white-space: normal;
  color: #38ffdc;
  transform: scaleY(.85);
  transform-origin: top left;
  -webkit-text-stroke: 3px #38ffdc;
}
```
